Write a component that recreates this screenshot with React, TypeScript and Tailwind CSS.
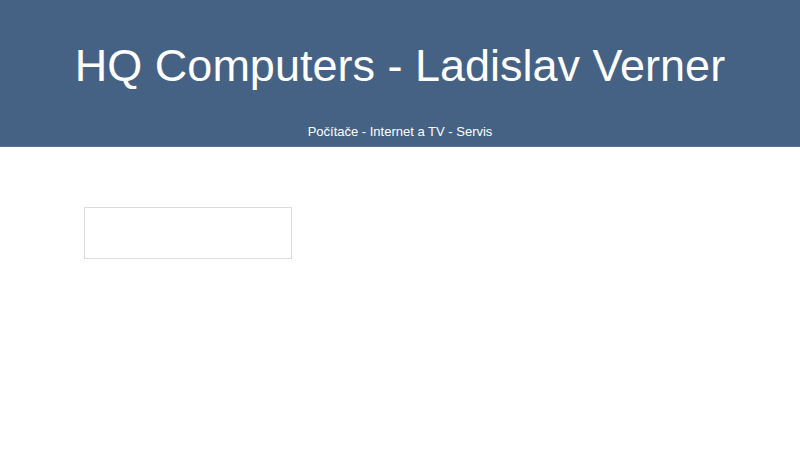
export default function App() {
  return (
    <div className="min-h-[450px] bg-white" style={{ fontFamily: '"Liberation Sans", Arial, sans-serif' }}>
      <header className="h-[147px] bg-[#456285] text-white flex flex-col items-center border-b border-[#5a7596]">
        <h1 className="pt-[40px] text-[45px] leading-[52px]">HQ Computers - Ladislav Verner</h1>
        <p className="mt-[32px] text-[13px] leading-[16px]">Počítače - Internet a TV - Servis</p>
      </header>
      <main className="pt-[60px] pl-[84px]">
        <div className="w-[208px] h-[52px] border border-[#dcdcdc] bg-white" />
      </main>
    </div>
  );
}
